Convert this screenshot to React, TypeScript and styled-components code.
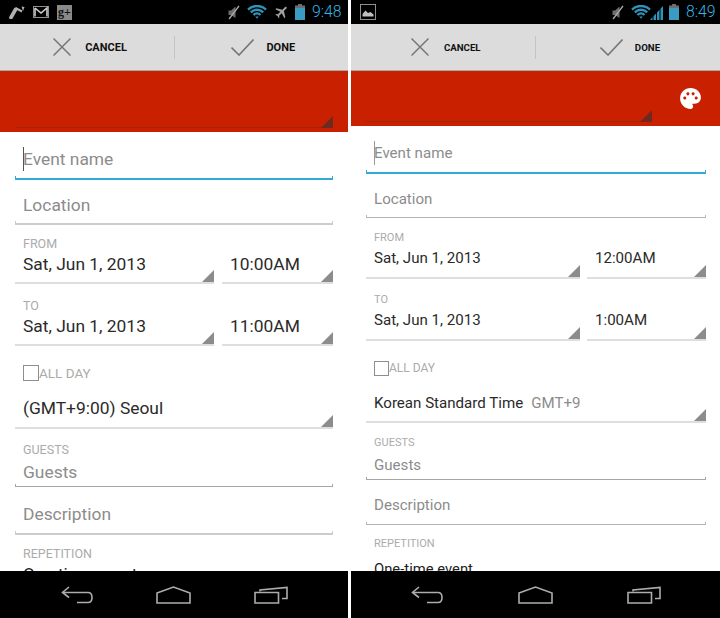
import React from "react";
import styled, { createGlobalStyle, ThemeProvider } from "styled-components";
import { MdPalette, MdFlight } from "react-icons/md";

const GlobalStyle = createGlobalStyle`
  html, body { margin: 0; padding: 0; background: #fff; }
  body { font-family: Roboto, "Liberation Sans", sans-serif; }
`;

const Shots = styled.div`
  display: flex;
  gap: 3px;
  width: 720px;
  height: 618px;
  overflow: hidden;
`;

const Phone = styled.div<{ $width: number }>`
  display: flex;
  flex-direction: column;
  width: ${(p) => p.$width}px;
  height: 618px;
  flex-shrink: 0;
  background: #fff;
`;

const StatusBar = styled.div<{ $right: number }>`
  display: flex;
  align-items: center;
  justify-content: space-between;
  height: 24px;
  flex-shrink: 0;
  padding: 0 ${(p) => p.$right}px 0 9px;
  background: #000;
`;

const StatusGroup = styled.div<{ $gap: number }>`
  display: flex;
  align-items: center;
  gap: ${(p) => p.$gap}px;
`;

const Clock = styled.span`
  width: 30px;
  color: #33b5e5;
  font-size: 15.8px;
  font-weight: 300;
  line-height: 24px;
  white-space: nowrap;
`;

const GPlus = styled.span`
  display: flex;
  align-items: center;
  justify-content: center;
  width: 15px;
  height: 15px;
  background: #8a8a8a;
  color: #111;
  font-family: "Liberation Serif", serif;
  font-size: 12px;
  font-weight: bold;
`;

const SignalSlot = styled.span`
  margin: 0 -1px 0 -8px;
  line-height: 0;
`;

const PlaneSlot = styled.span`
  margin-right: -2px;
  line-height: 0;
  transform: rotate(45deg);
`;

const ActionBar = styled.div`
  display: grid;
  grid-template-columns: 1fr 1px 1fr;
  align-items: center;
  height: 47px;
  flex-shrink: 0;
  background: #dcdcdc;
  border-bottom: 1px solid #a8a8a8;
  box-sizing: border-box;
`;

const ActionButton = styled.div<{ $gap: number; $shift: number }>`
  display: flex;
  align-items: center;
  justify-content: center;
  gap: ${(p) => p.$gap}px;
  padding-left: ${(p) => p.$shift}px;
  color: #111;
  font-size: ${(p) => p.theme.actionFont}px;
  font-weight: 700;
`;

const ActionDivider = styled.div`
  height: 23px;
  background: #c4c4c4;
`;

const RedHeader = styled.div<{ $height: number }>`
  display: flex;
  align-items: flex-end;
  height: ${(p) => p.$height}px;
  flex-shrink: 0;
  padding: 0 15px 4px;
  box-sizing: border-box;
  background: #c92000;
`;

const ColorSpinner = styled.div<{ $width?: number }>`
  position: relative;
  flex: ${(p) => (p.$width ? `0 0 ${p.$width}px` : 1)};
  height: 1px;
  background: #aa2010;
`;

const Corner = styled.span<{ $color?: string }>`
  position: absolute;
  right: 0;
  bottom: 0;
  width: 12px;
  height: 12px;
  background: ${(p) => p.$color ?? "#8c8c8c"};
  clip-path: polygon(100% 0, 100% 100%, 0 100%);
`;

const PaletteSlot = styled.div`
  align-self: flex-start;
  margin: 15px 0 0 26px;
  color: #fff;
  line-height: 0;
`;

const Form = styled.div<{ $right: number }>`
  flex: 1;
  min-height: 0;
  overflow: hidden;
  padding: 0 ${(p) => p.$right}px 0 15px;
`;

const Field = styled.div<{ $top: number }>`
  padding-top: ${(p) => p.$top}px;
`;

const Caption = styled.div<{ $gap?: number }>`
  padding-left: 8px;
  margin-bottom: ${(p) => p.$gap ?? 0}px;
  color: #ababab;
  font-size: ${(p) => p.theme.captionFont}px;
  line-height: 15px;
`;

const Hint = styled.div<{ $pad: number }>`
  padding: 0 0 ${(p) => p.$pad}px 8px;
  color: #8c8c8c;
  font-size: ${(p) => p.theme.bodyFont}px;
  line-height: 24px;
`;

const Caret = styled.span`
  display: inline-block;
  width: 1px;
  height: 24px;
  margin-right: -1px;
  vertical-align: top;
  background: ${(p) => p.theme.caretColor};
`;

const Underline = styled.div<{ $tone: "focus" | "idle" | "dark" }>`
  height: 2px;
  border-style: solid;
  border-top-width: 0;
  border-left-width: 1px;
  border-right-width: 1px;
  border-bottom-width: ${(p) => (p.$tone === "focus" ? "2px" : p.$tone === "dark" ? "1px" : p.theme.idleWidth)};
  border-color: ${(p) => (p.$tone === "focus" ? "#33a9d8" : p.$tone === "dark" ? "#a6a6a6" : p.theme.idleColor)};
`;

const SpinnerRow = styled.div<{ $timeWidth: number; $gap: number }>`
  display: grid;
  grid-template-columns: 1fr ${(p) => p.$timeWidth}px;
  column-gap: ${(p) => p.$gap}px;
`;

const Spinner = styled.div<{ $pad: number }>`
  position: relative;
  padding: 0 0 ${(p) => p.$pad}px 8px;
  border-bottom: 2px solid #dedede;
  color: #2a2a2a;
  font-size: ${(p) => p.theme.bodyFont}px;
  line-height: 24px;
`;

const MutedNote = styled.span`
  margin-left: 8px;
  color: #8c8c8c;
`;

const AllDayRow = styled.div<{ $top: number; $box: number }>`
  display: flex;
  align-items: center;
  padding: ${(p) => p.$top}px 0 0 8px;
  color: #ababab;
  font-size: ${(p) => p.theme.captionFont + 1}px;
  line-height: ${(p) => p.$box}px;
`;

const CheckBox = styled.span<{ $box: number }>`
  width: ${(p) => p.$box}px;
  height: ${(p) => p.$box}px;
  box-sizing: border-box;
  border: 1px solid #8e8e8e;
  background: #fff;
`;

const PlainValue = styled.div<{ $gap: number }>`
  margin-top: ${(p) => p.$gap}px;
  padding-left: 8px;
  color: #222;
  font-size: ${(p) => p.theme.bodyFont - 0.3}px;
  line-height: 24px;
`;

const NavBar = styled.div<{ $pad: number }>`
  display: grid;
  flex-shrink: 0;
  grid-template-columns: repeat(3, 1fr);
  height: 47px;
  padding: 0 ${(p) => p.$pad}px;
  background: #000;
`;

const NavSlot = styled.div`
  display: flex;
  align-items: center;
  justify-content: center;
  line-height: 0;
`;

const NoteIcon = () => (
  <svg width="16" height="13" viewBox="0 0 16 13" fill="none" stroke="#b0b0b0">
    <path d="M2 11.5 L6.5 3.5" strokeWidth="3.6" strokeLinecap="round" />
    <path d="M6.5 2 L13 5.5" strokeWidth="2" />
    <path d="M12.5 0.5 L15.5 1 L14 5 Z" fill="#b0b0b0" stroke="none" />
  </svg>
);

const MailIcon = () => (
  <svg width="16" height="12" viewBox="0 0 16 12" fill="none">
    <rect x="0.5" y="0.5" width="15" height="11" stroke="#8f8f8f" />
    <path d="M2 2 L8 7 L14 2 V10.5 M2 2 V10.5" stroke="#cfcfcf" strokeWidth="1.6" />
  </svg>
);

const PictureIcon = () => (
  <svg width="16" height="16" viewBox="0 0 16 16" fill="none">
    <rect x="0.5" y="0.5" width="15" height="15" stroke="#8f8f8f" />
    <path d="M2.5 12.5 V10 L5.5 6.5 L8 9 L10.5 8 L13.5 10.5 V12.5 Z" fill="#c0c0c0" />
  </svg>
);

const MuteIcon = () => (
  <svg width="12" height="15" viewBox="0 0 12 15" fill="none">
    <path d="M0.5 5.5 H3 L7.5 1.5 V13 L3 10 H0.5 Z" fill="#6e6e6e" />
    <path d="M1 14 L11 1" stroke="#a8a8a8" strokeWidth="1.3" />
  </svg>
);

const WifiIcon = () => (
  <svg width="20" height="14" viewBox="0 0 20 14" fill="none" stroke="#2f93b8">
    <path d="M1 4.6 A13 13 0 0 1 19 4.6" strokeWidth="2.4" />
    <path d="M3.8 7.3 A9 9 0 0 1 16.2 7.3" strokeWidth="2.4" />
    <path d="M6.5 10 A5 5 0 0 1 13.5 10" strokeWidth="2.4" />
    <path d="M8.2 11.4 L10 13.8 L11.8 11.4 Z" fill="#2f93b8" stroke="none" />
  </svg>
);

const SignalIcon = () => (
  <svg width="13" height="15" viewBox="0 0 13 15">
    <path
      d="M0 15 L2.5 12.3 V15 Z M3.5 15 V11.2 L6 8.5 V15 Z M7 15 V7.5 L9.5 4.8 V15 Z M10.5 15 V3.7 L13 1 V15 Z"
      fill="#2f93b8"
    />
  </svg>
);

const BatteryIcon = () => (
  <svg width="10" height="16" viewBox="0 0 10 16">
    <rect x="3" y="0" width="4" height="2" fill="#6e6e6e" />
    <rect x="0" y="1.5" width="10" height="3" fill="#6e6e6e" />
    <rect x="0" y="4" width="10" height="12" fill="#3a9cc2" />
  </svg>
);

const CloseIcon = () => (
  <svg width="18" height="18" viewBox="0 0 18 18" stroke="#777" strokeWidth="1.5">
    <path d="M0.5 0.5 L17.5 17.5 M17.5 0.5 L0.5 17.5" />
  </svg>
);

const CheckIcon = () => (
  <svg width="23" height="17" viewBox="0 0 23 17" fill="none" stroke="#777" strokeWidth="1.6">
    <path d="M0.5 8.5 L8 16 L22.5 0.5" />
  </svg>
);

const BackIcon = () => (
  <svg width="32" height="18" viewBox="0 0 32 18" fill="none" stroke="#adadad" strokeWidth="1.6">
    <path d="M8 1 L1.5 6.5 L8 11.5" />
    <path d="M1.5 6.5 H27 Q31 6.5 31 11.5 Q31 16.5 27 16.5 H16" />
  </svg>
);

const HomeIcon = () => (
  <svg width="35" height="18" viewBox="0 0 35 18" fill="none" stroke="#adadad" strokeWidth="1.6">
    <path d="M1 7 L17.5 1 L34 7 V17 H1 Z" />
  </svg>
);

const RecentsIcon = () => (
  <svg width="34" height="18" viewBox="0 0 34 18" fill="none" stroke="#adadad" strokeWidth="1.6">
    <path d="M1 6.5 H24.5 V17 H1 Z" />
    <path d="M6 5.5 V4 L33 1.5 V12.5 H28" />
  </svg>
);

type Times = { from: string; to: string };

type Metrics = {
  width: number;
  statusRight: number;
  headerHeight: number;
  formRight: number;
  timeWidth: number;
  timeGap: number;
  captionGap: number;
  fromTop: number;
  toTop: number;
  datePad: number;
  boxSize: number;
  allDayTop: number;
  zonePad: number;
  guestsTop: number;
  guestsPad: number;
  descTop: number;
  repTop: number;
  repGap: number;
  navPad: number;
  paletteWidth?: number;
};

const bigPhone: Metrics = {
  width: 348,
  statusRight: 6,
  headerHeight: 61,
  formRight: 15,
  timeWidth: 111,
  timeGap: 8,
  captionGap: 1,
  fromTop: 11,
  toTop: 14,
  datePad: 6,
  boxSize: 16,
  allDayTop: 19,
  zonePad: 7,
  guestsTop: 13,
  guestsPad: 0,
  descTop: 15,
  repTop: 11,
  repGap: 1,
  navPad: 28,
};

const smallPhone: Metrics = {
  width: 369,
  statusRight: 4,
  headerHeight: 55,
  formRight: 14,
  timeWidth: 119,
  timeGap: 7,
  captionGap: 1,
  fromTop: 12,
  toTop: 13,
  datePad: 7,
  boxSize: 15,
  allDayTop: 20,
  zonePad: 6,
  guestsTop: 12,
  guestsPad: 0,
  descTop: 13,
  repTop: 11,
  repGap: 6,
  navPad: 22,
  paletteWidth: 286,
};

type ScreenTheme = {
  bodyFont: number;
  captionFont: number;
  actionFont: number;
  idleWidth: string;
  idleColor: string;
  caretColor: string;
};

type ScreenProps = {
  metrics: Metrics;
  theme: ScreenTheme;
  notifications: React.ReactNode;
  indicators: React.ReactNode;
  clock: string;
  times: Times;
  zone: React.ReactNode;
};

function Screen({ metrics: m, theme, notifications, indicators, clock, times, zone }: ScreenProps) {
  return (
    <ThemeProvider theme={theme}>
      <Phone $width={m.width}>
        <StatusBar $right={m.statusRight}>
          <StatusGroup $gap={8}>{notifications}</StatusGroup>
          <StatusGroup $gap={7}>
            {indicators}
            <Clock>{clock}</Clock>
          </StatusGroup>
        </StatusBar>

        <ActionBar>
          <ActionButton $gap={14.5} $shift={6}>
            <CloseIcon />
            CANCEL
          </ActionButton>
          <ActionDivider />
          <ActionButton $gap={12} $shift={4}>
            <CheckIcon />
            DONE
          </ActionButton>
        </ActionBar>

        <RedHeader $height={m.headerHeight}>
          <ColorSpinner $width={m.paletteWidth}>
            <Corner $color="#6e2a20" />
          </ColorSpinner>
          {m.paletteWidth && (
            <PaletteSlot>
              <MdPalette size={25} />
            </PaletteSlot>
          )}
        </RedHeader>

        <Form $right={m.formRight}>
          <Field $top={15}>
            <Hint $pad={5}>
              <Caret />
              Event name
            </Hint>
            <Underline $tone="focus" />
          </Field>
          <Field $top={13}>
            <Hint $pad={4}>Location</Hint>
            <Underline $tone="idle" />
          </Field>

          <Field $top={m.fromTop}>
            <Caption $gap={m.captionGap}>FROM</Caption>
            <SpinnerRow $timeWidth={m.timeWidth} $gap={m.timeGap}>
              <Spinner $pad={m.datePad}>
                Sat, Jun 1, 2013
                <Corner />
              </Spinner>
              <Spinner $pad={m.datePad}>
                {times.from}
                <Corner />
              </Spinner>
            </SpinnerRow>
          </Field>
          <Field $top={m.toTop}>
            <Caption $gap={m.captionGap}>TO</Caption>
            <SpinnerRow $timeWidth={m.timeWidth} $gap={m.timeGap}>
              <Spinner $pad={m.datePad}>
                Sat, Jun 1, 2013
                <Corner />
              </Spinner>
              <Spinner $pad={m.datePad}>
                {times.to}
                <Corner />
              </Spinner>
            </SpinnerRow>
          </Field>

          <AllDayRow $top={m.allDayTop} $box={m.boxSize}>
            <CheckBox $box={m.boxSize} />
            ALL DAY
          </AllDayRow>

          <Field $top={15}>
            <Spinner $pad={m.zonePad}>
              {zone}
              <Corner />
            </Spinner>
          </Field>

          <Field $top={m.guestsTop}>
            <Caption $gap={3}>GUESTS</Caption>
            <Hint $pad={m.guestsPad}>Guests</Hint>
            <Underline $tone="dark" />
          </Field>
          <Field $top={m.descTop}>
            <Hint $pad={5}>Description</Hint>
            <Underline $tone="idle" />
          </Field>

          <Field $top={m.repTop}>
            <Caption>REPETITION</Caption>
            <PlainValue $gap={m.repGap}>One-time event</PlainValue>
          </Field>
        </Form>

        <NavBar $pad={m.navPad}>
          <NavSlot>
            <BackIcon />
          </NavSlot>
          <NavSlot>
            <HomeIcon />
          </NavSlot>
          <NavSlot>
            <RecentsIcon />
          </NavSlot>
        </NavBar>
      </Phone>
    </ThemeProvider>
  );
}

export default function App() {
  return (
    <>
      <GlobalStyle />
      <Shots>
        <Screen
          metrics={bigPhone}
          theme={{
            bodyFont: 17.4,
            captionFont: 12.5,
            actionFont: 11,
            idleWidth: "2px",
            idleColor: "#cccccc",
            caretColor: "#555",
          }}
          notifications={
            <>
              <NoteIcon />
              <MailIcon />
              <GPlus>g+</GPlus>
            </>
          }
          indicators={
            <>
              <MuteIcon />
              <WifiIcon />
              <PlaneSlot>
                <MdFlight size={16} color="#a0a0a0" />
              </PlaneSlot>
              <BatteryIcon />
            </>
          }
          clock="9:48"
          times={{ from: "10:00AM", to: "11:00AM" }}
          zone="(GMT+9:00) Seoul"
        />
        <Screen
          metrics={smallPhone}
          theme={{
            bodyFont: 15.1,
            captionFont: 11,
            actionFont: 9.7,
            idleWidth: "1px",
            idleColor: "#b4b4b4",
            caretColor: "#999",
          }}
          notifications={<PictureIcon />}
          indicators={
            <>
              <MuteIcon />
              <WifiIcon />
              <SignalSlot>
                <SignalIcon />
              </SignalSlot>
              <BatteryIcon />
            </>
          }
          clock="8:49"
          times={{ from: "12:00AM", to: "1:00AM" }}
          zone={
            <>
              Korean Standard Time<MutedNote>GMT+9</MutedNote>
            </>
          }
        />
      </Shots>
    </>
  );
}
